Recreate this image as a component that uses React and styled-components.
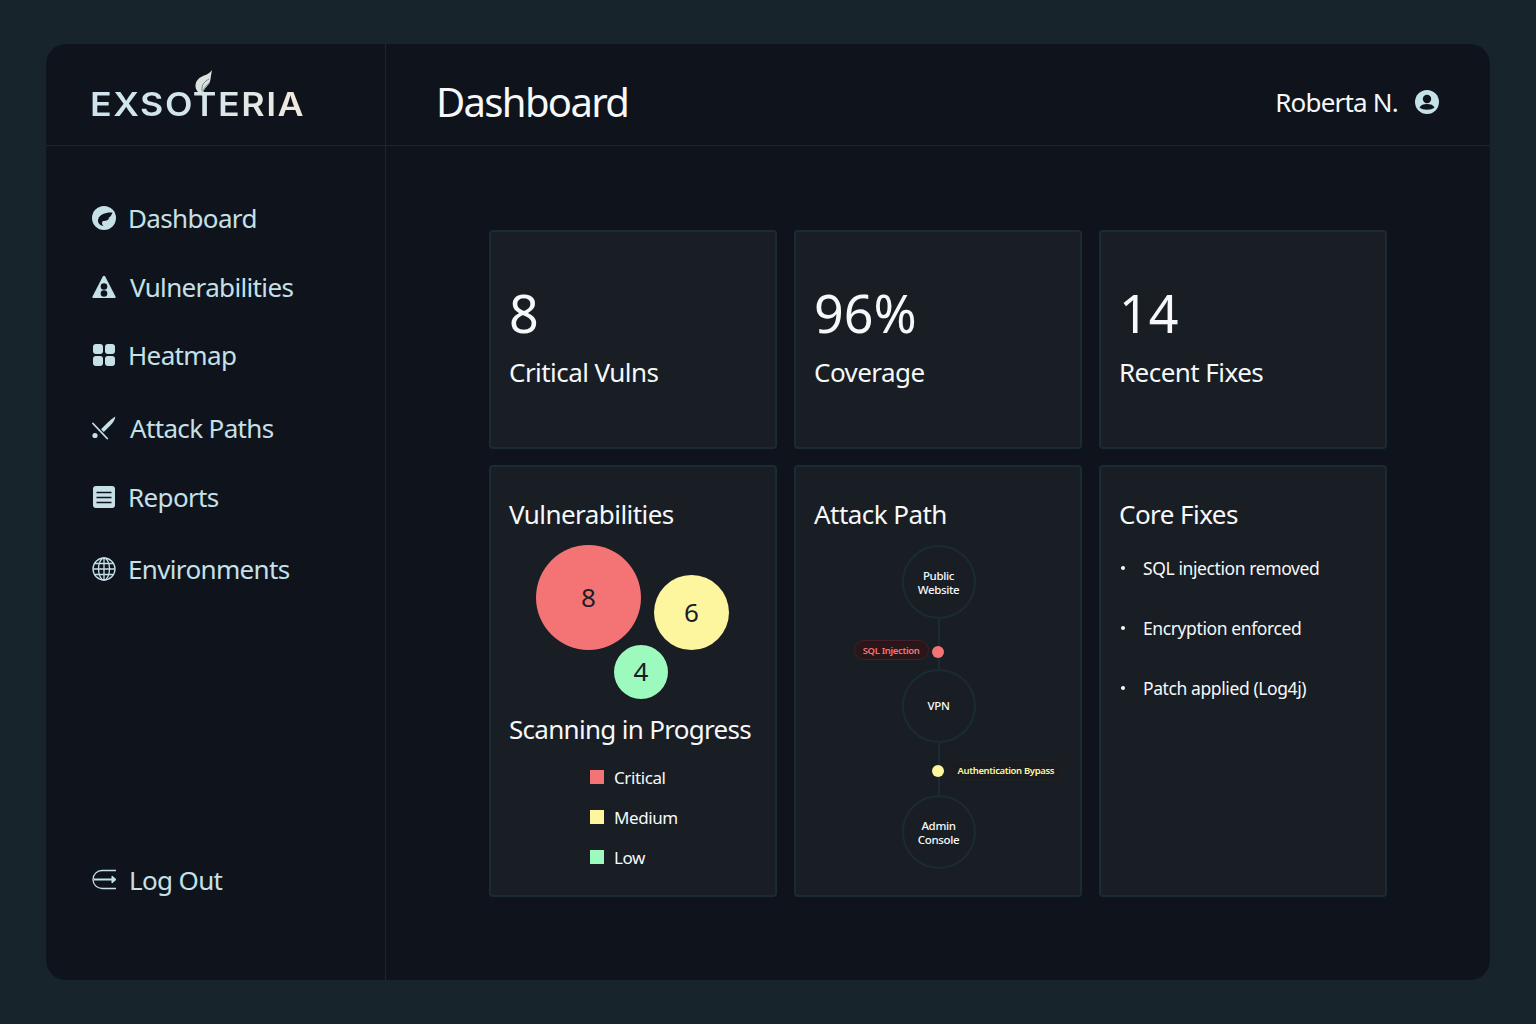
import React from 'react';
import styled, { createGlobalStyle } from 'styled-components';

const Global = createGlobalStyle`
  * { box-sizing: border-box; }
  html, body { margin: 0; padding: 0; }
  body {
    background: #17242c;
    font-family: "Noto Sans", "Open Sans", sans-serif;
  }
`;

const Page = styled.div`
  width: 1536px;
  height: 1024px;
  padding: 44px 46px;
`;

const Panel = styled.div`
  height: 936px;
  background: #0f141c;
  border-radius: 20px;
  display: grid;
  grid-template-columns: 340px 1fr;
  grid-template-rows: 102px 1fr;
  overflow: hidden;
`;

const LogoCell = styled.div`
  border-right: 1px solid #1a2730;
  border-bottom: 1px solid #1a2730;
  padding: 39px 0 0 44px;
`;

const Logo = styled.div`
  position: relative;
  width: 214px;
  height: 44px;
`;

const LogoText = styled.span`
  display: inline-block;
  font-family: "Inter", "Lato", sans-serif;
  font-weight: 600;
  font-size: 32px;
  line-height: 44px;
  letter-spacing: 1.35px;
  white-space: nowrap;
  transform: scaleX(1.12);
  transform-origin: left center;
  background: linear-gradient(90deg, #cde4ec 0%, #d6e6ea 55%, #f1eadd 100%);
  -webkit-background-clip: text;
  background-clip: text;
  color: transparent;
`;

const Leaf = styled.svg`
  position: absolute;
  left: 105px;
  top: -13px;
`;

const HeaderCell = styled.header`
  border-bottom: 1px solid #1a2730;
  display: flex;
  align-items: center;
  justify-content: space-between;
  padding: 14px 51px 0 50px;
`;

const Title = styled.h1`
  margin: 0;
  font-size: 40px;
  font-weight: 400;
  letter-spacing: -1.65px;
  color: #f6f8f9;
`;

const UserBox = styled.div`
  display: flex;
  align-items: center;
  gap: 17px;
  font-size: 26px;
  letter-spacing: -0.8px;
  color: #f6f8f9;
`;

const Sidebar = styled.aside`
  border-right: 1px solid #1a2730;
  padding: 55px 0 0 46px;
  display: flex;
  flex-direction: column;
`;

const NavItem = styled.a`
  display: flex;
  align-items: center;
  gap: ${({ $gap }) => $gap || 12}px;
  height: 34px;
  margin-top: ${({ $top }) => $top || 0}px;
  font-size: 26px;
  letter-spacing: -0.65px;
  color: #c6e0e8;
  white-space: nowrap;
`;

const Main = styled.main`
  padding: 84px 0 0 103px;
  display: grid;
  grid-template-columns: repeat(3, 288px);
  grid-template-rows: 219px 432px;
  column-gap: 17px;
  row-gap: 16px;
  align-content: start;
`;

const Card = styled.section`
  background: #191e25;
  border: 2px solid #1a2b33;
  border-radius: 4px;
  color: #f6f8f9;
  padding: ${({ $stat }) => ($stat ? '0 18px 0 18px' : '29px 18px 0 18px')};
  display: flex;
  flex-direction: column;
  justify-content: ${({ $stat }) => ($stat ? 'center' : 'flex-start')};
  position: relative;
`;

const StatValue = styled.div`
  font-size: 52px;
  line-height: 70px;
  letter-spacing: 0;
  margin-bottom: 4px;
`;

const StatLabel = styled.div`
  font-size: 26px;
  line-height: 40px;
  letter-spacing: -0.55px;
  margin-bottom: 10px;
`;

const CardTitle = styled.h2`
  margin: 0;
  font-size: 26px;
  font-weight: 400;
  line-height: 36px;
  letter-spacing: ${({ $tight }) => ($tight ? -0.7 : -0.55)}px;
`;

const Bubbles = styled.div`
  position: relative;
  height: 166px;
  margin-top: 13px;
`;

const Bubble = styled.div`
  position: absolute;
  left: ${({ $x }) => $x}px;
  top: ${({ $y }) => $y}px;
  width: ${({ $size }) => $size}px;
  height: ${({ $size }) => $size}px;
  padding-bottom: 2px;
  border-radius: 50%;
  background: ${({ $color }) => $color};
  color: #191e25;
  font-size: 26px;
  display: flex;
  align-items: center;
  justify-content: center;
`;

const Legend = styled.div`
  margin: 18px 0 0 81px;
  display: flex;
  flex-direction: column;
  gap: 16px;
`;

const LegendRow = styled.div`
  display: flex;
  align-items: center;
  gap: 10px;
  height: 24px;
  font-size: 17px;
  letter-spacing: -0.4px;
`;

const Swatch = styled.span`
  width: 14px;
  height: 14px;
  background: ${({ $color }) => $color};
`;

const PathColumn = styled.div`
  display: flex;
  flex-direction: column;
  align-items: center;
  margin-top: 13px;
  padding-left: 1px;
`;

const PathNode = styled.div`
  width: 74px;
  height: 74px;
  padding-top: ${({ $single }) => ($single ? 0 : 2)}px;
  border-radius: 50%;
  border: 2px solid #1a2b33;
  display: flex;
  align-items: center;
  justify-content: center;
  text-align: center;
  font-size: 11.5px;
  line-height: 14.5px;
  letter-spacing: -0.35px;
  font-weight: 500;
`;

const Connector = styled.div`
  position: relative;
  width: 2px;
  height: ${({ $h }) => $h}px;
  background: #1a2b33;
`;

const Dot = styled.span`
  position: absolute;
  left: -6px;
  top: ${({ $top }) => $top}px;
  width: 12px;
  height: 12px;
  border-radius: 50%;
  background: ${({ $color }) => $color};
`;

const Pill = styled.span`
  position: absolute;
  top: ${({ $top }) => $top}px;
  ${({ $side }) => ($side === 'left' ? 'right: 11px;' : 'left: 11px;')}
  height: 20px;
  padding: 0 8px;
  border-radius: 10px;
  display: flex;
  align-items: center;
  font-size: 9.5px;
  font-weight: 600;
  letter-spacing: -0.36px;
  white-space: nowrap;
  color: ${({ $color }) => $color};
  background: ${({ $bg }) => $bg};
  border: 1px solid ${({ $line }) => $line};
`;

const FixList = styled.ul`
  list-style: none;
  margin: 24px 0 0;
  padding: 0;
  display: flex;
  flex-direction: column;
  gap: 36px;
`;

const FixItem = styled.li`
  display: flex;
  align-items: center;
  gap: 18px;
  height: 24px;
  font-size: 17.5px;
  letter-spacing: -0.4px;

  &::before {
    content: '';
    width: 4px;
    height: 4px;
    border-radius: 50%;
    background: #f6f8f9;
    margin-left: 2px;
  }
`;

const Icon = ({ children, size = 24 }) => (
  <svg width={size} height={size} viewBox="0 0 24 24" fill="none">{children}</svg>
);

const ICON = '#c6e0e8';
const DARK = '#0f141c';

const DashboardIcon = () => (
  <Icon>
    <circle cx="12" cy="12" r="12" fill={ICON} />
    <path d="M20.500 6.500 C15 6 7 7.500 6 14 C5.700 17 8 19.500 11.500 20 C9.800 18.500 9.500 16.300 11 15 C14 15.200 16.500 14 17.500 12.300 L15.500 12.200 C18 11.500 19.500 9.500 20.500 6.500z" fill={DARK} />
  </Icon>
);

const WarningIcon = () => (
  <Icon>
    <path d="M12 .8c.5 0 .9.3 1.200.8l10.300 19.800c.4.8-.1 1.700-1 1.700H1.500c-.9 0-1.400-.9-1-1.700L10.800 1.600c.3-.5.700-.8 1.200-.8z" fill={ICON} />
    <circle cx="12" cy="11.500" r="3.300" fill={DARK} />
    <circle cx="12" cy="18.500" r="3.300" fill={DARK} />
  </Icon>
);

const HeatmapIcon = () => (
  <Icon>
    <rect x="1" y="1" width="10" height="10" rx="3" fill={ICON} />
    <rect x="13" y="1" width="10" height="10" rx="3" fill={ICON} />
    <rect x="1" y="13" width="10" height="10" rx="3" fill={ICON} />
    <rect x="13" y="13" width="10" height="10" rx="3" fill={ICON} />
  </Icon>
);

const SwordIcon = () => (
  <Icon>
    <path d="M23.300.5c-.3 3-2 6-4.500 8.500l-8.500 8.500-2.800-2.800 8-8c2-2 5-4.500 7.800-6.200z" fill={ICON} />
    <path d="M1 7.500l14.200 15" stroke={DARK} strokeWidth="4" />
    <path d="M1 7.500l14.200 15" stroke={ICON} strokeWidth="1.800" strokeLinecap="round" />
    <circle cx="3" cy="19.500" r="2.600" fill={ICON} />
  </Icon>
);

const ReportIcon = () => (
  <Icon>
    <rect x="1" y="1" width="22" height="22" rx="3" fill={ICON} />
    <path d="M4.500 7.500h15M4.500 12.500h15M4.500 17.500h15" stroke={DARK} strokeWidth="1.500" />
  </Icon>
);

const GlobeIcon = () => (
  <Icon>
    <g stroke={ICON} strokeWidth="1.300">
      <circle cx="12" cy="12" r="11" />
      <ellipse cx="12" cy="12" rx="5.500" ry="11" />
      <path d="M12 1v22M1 12h22M3 6.500h18M3 17.500h18" />
    </g>
  </Icon>
);

const LogoutIcon = () => (
  <svg width="26" height="24" viewBox="0 0 26 24" fill="none" stroke={ICON}>
    <path d="M24 2.500H10C5 2.500 1 6.500 1 11.500s4 9 9 9h14" strokeWidth="1.300" />
    <path d="M2 11.500h21" strokeWidth="2" />
    <path d="M20 8l4 3.500-4 3.500z" fill={ICON} strokeWidth="1" />
  </svg>
);

const UserIcon = () => (
  <Icon>
    <circle cx="12" cy="12" r="12" fill={ICON} />
    <circle cx="12" cy="9" r="4.200" fill={DARK} />
    <path d="M4.500 17.500c1-2.500 4-3.500 7.500-3.500s6.500 1 7.500 3.500c-1.800 1.500-4.500 2.200-7.500 2.200s-5.700-.7-7.500-2.200z" fill={DARK} />
  </Icon>
);

const navItems = [
  { label: 'Dashboard', icon: <DashboardIcon />, top: 0, gap: 12 },
  { label: 'Vulnerabilities', icon: <WarningIcon />, top: 35, gap: 14 },
  { label: 'Heatmap', icon: <HeatmapIcon />, top: 34, gap: 12 },
  { label: 'Attack Paths', icon: <SwordIcon />, top: 39, gap: 14 },
  { label: 'Reports', icon: <ReportIcon />, top: 35, gap: 12 },
  { label: 'Environments', icon: <GlobeIcon />, top: 38, gap: 12 },
];

const legend = [
  { label: 'Critical', color: '#f47476' },
  { label: 'Medium', color: '#fef69f' },
  { label: 'Low', color: '#9dfabf' },
];

const fixes = ['SQL injection removed', 'Encryption enforced', 'Patch applied (Log4j)'];

const App = () => (
  <Page>
    <Global />
    <Panel>
      <LogoCell>
        <Logo>
          <LogoText>EXSOTERIA</LogoText>
          <Leaf width="18" height="27" viewBox="0 0 18 27">
            <path d="M17 0C16.500 3 16 5 15.500 9 15 14 11 17 9 20L8 26C3 23 0 19 .5 15 1 10 5 7 9 5.500 12 4.500 15 3 17 0z" fill="#dbe3e0" />
            <path d="M14 9C10 11 6 15 7 21M15 12.500C12 15 9 17 8 22" stroke="#76878a" strokeWidth="1" fill="none" />
          </Leaf>
        </Logo>
      </LogoCell>
      <HeaderCell>
        <Title>Dashboard</Title>
        <UserBox>
          Roberta N.
          <UserIcon />
        </UserBox>
      </HeaderCell>
      <Sidebar>
        {navItems.map((item) => (
          <NavItem key={item.label} $top={item.top} $gap={item.gap}>
            {item.icon}
            {item.label}
          </NavItem>
        ))}
        <NavItem $top={277} $gap={11}>
          <LogoutIcon />
          Log Out
        </NavItem>
      </Sidebar>
      <Main>
        <Card $stat>
          <StatValue>8</StatValue>
          <StatLabel>Critical Vulns</StatLabel>
        </Card>
        <Card $stat>
          <StatValue>96%</StatValue>
          <StatLabel>Coverage</StatLabel>
        </Card>
        <Card $stat>
          <StatValue>14</StatValue>
          <StatLabel>Recent Fixes</StatLabel>
        </Card>
        <Card>
          <CardTitle>Vulnerabilities</CardTitle>
          <Bubbles>
            <Bubble $x={27} $y={0} $size={105} $color="#f47476">8</Bubble>
            <Bubble $x={145} $y={30} $size={75} $color="#fef69f">6</Bubble>
            <Bubble $x={105} $y={100} $size={54} $color="#9dfabf">4</Bubble>
          </Bubbles>
          <CardTitle $tight>Scanning in Progress</CardTitle>
          <Legend>
            {legend.map((row) => (
              <LegendRow key={row.label}>
                <Swatch $color={row.color} />
                {row.label}
              </LegendRow>
            ))}
          </Legend>
        </Card>
        <Card>
          <CardTitle>Attack Path</CardTitle>
          <PathColumn>
            <PathNode>Public<br />Website</PathNode>
            <Connector $h={50}>
              <Dot $top={27} $color="#f47476" />
              <Pill $side="left" $top={21} $color="#f47476" $bg="#2a1519" $line="#40202a">SQL Injection</Pill>
            </Connector>
            <PathNode $single>VPN</PathNode>
            <Connector $h={52}>
              <Dot $top={22} $color="#fef69f" />
              <Pill $side="right" $top={17} $color="#fef69f" $bg="#1a1c1f" $line="#1f2124">Authentication Bypass</Pill>
            </Connector>
            <PathNode>Admin<br />Console</PathNode>
          </PathColumn>
        </Card>
        <Card>
          <CardTitle>Core Fixes</CardTitle>
          <FixList>
            {fixes.map((fix) => (
              <FixItem key={fix}>{fix}</FixItem>
            ))}
          </FixList>
        </Card>
      </Main>
    </Panel>
  </Page>
);

export default App;
